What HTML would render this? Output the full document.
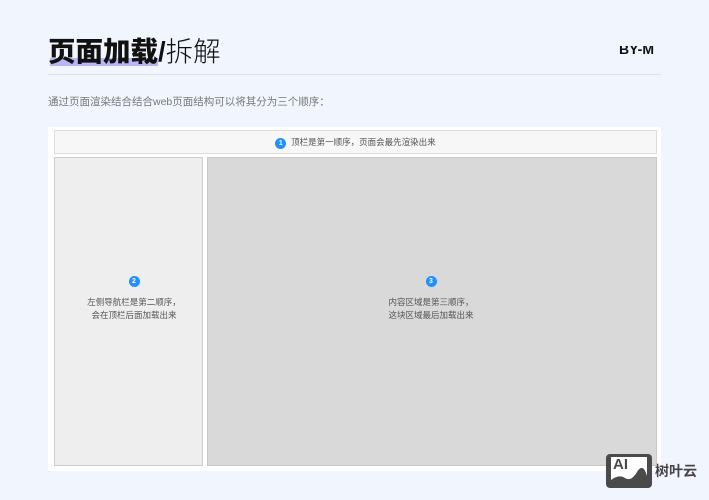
<!DOCTYPE html>
<html><head><meta charset="utf-8"><style>
body{margin:0;width:709px;height:500px;background:#f1f5fd;position:relative;overflow:hidden;font-family:"Liberation Sans","Noto Sans CJK SC",sans-serif}
.a{position:absolute}
.num{display:inline-block;width:11px;height:11px;border-radius:50%;background:#1e90ff;color:#fff;font-size:7px;line-height:11px;text-align:center;font-weight:bold}
</style></head><body>
<div class="a" style="left:50px;top:58px;width:108px;height:8px;background:#b9b6f5"></div>
<div class="a" style="left:48px;top:34px;font-size:27.5px;line-height:36px;color:#111"><b style="font-weight:900">页面加载/</b><span style="font-weight:300">拆解</span></div>
<div class="a" style="left:619px;top:46px;height:10px;overflow:hidden"><div style="margin-top:-5px;font-size:14px;font-weight:bold;color:#111">BY-M</div></div>
<div class="a" style="left:48px;top:74px;width:613px;height:1px;background:#dde1e8"></div>
<div class="a" style="left:48px;top:94px;font-size:10.5px;color:#777">通过页面渲染结合结合web页面结构可以将其分为三个顺序：</div>
<div class="a" style="left:48px;top:127px;width:613px;height:344px;background:#fff"></div>
<div class="a" style="left:54px;top:130px;width:601px;height:22px;background:#f7f7f7;border:1px solid #ddd;font-size:8.5px;color:#555;text-align:center;line-height:22px"><span class="num">1</span>&nbsp; 顶栏是第一顺序，页面会最先渲染出来</div>
<div class="a" style="left:54px;top:157px;width:147px;height:307px;background:#eeeeee;border:1px solid #ccc"></div>
<div class="a" style="left:54px;top:274px;width:160px;text-align:center;font-size:8.5px;color:#555;line-height:13px"><span class="num">2</span><div style="height:9px"></div>左侧导航栏是第二顺序，<br>会在顶栏后面加载出来</div>
<div class="a" style="left:207px;top:157px;width:448px;height:307px;background:#d9d9d9;border:1px solid #c8c8c8"></div>
<div class="a" style="left:207px;top:274px;width:448px;text-align:center;font-size:8.5px;color:#555;line-height:13px"><span class="num">3</span><div style="height:9px"></div>内容区域是第三顺序，<br>这块区域最后加载出来</div>
<div class="a" style="left:606px;top:454px;width:46px;height:34px;background:#4a4a4a;border-radius:4px;overflow:hidden">
<div class="a" style="left:5px;top:3px;width:36px;height:26px;background:#fff"></div>
<div class="a" style="left:7px;top:2px;font-size:15px;font-weight:bold;color:#4a4a4a">AI</div>
<svg class="a" style="left:5px;top:14px" width="36" height="16"><path d="M0 12 Q8 6 14 10 T26 4 T36 8 V16 H0Z" fill="#4a4a4a"/></svg>
</div>
<div class="a" style="left:655px;top:461px;font-size:14px;font-weight:bold;color:#444">树叶云</div>
</body></html>
